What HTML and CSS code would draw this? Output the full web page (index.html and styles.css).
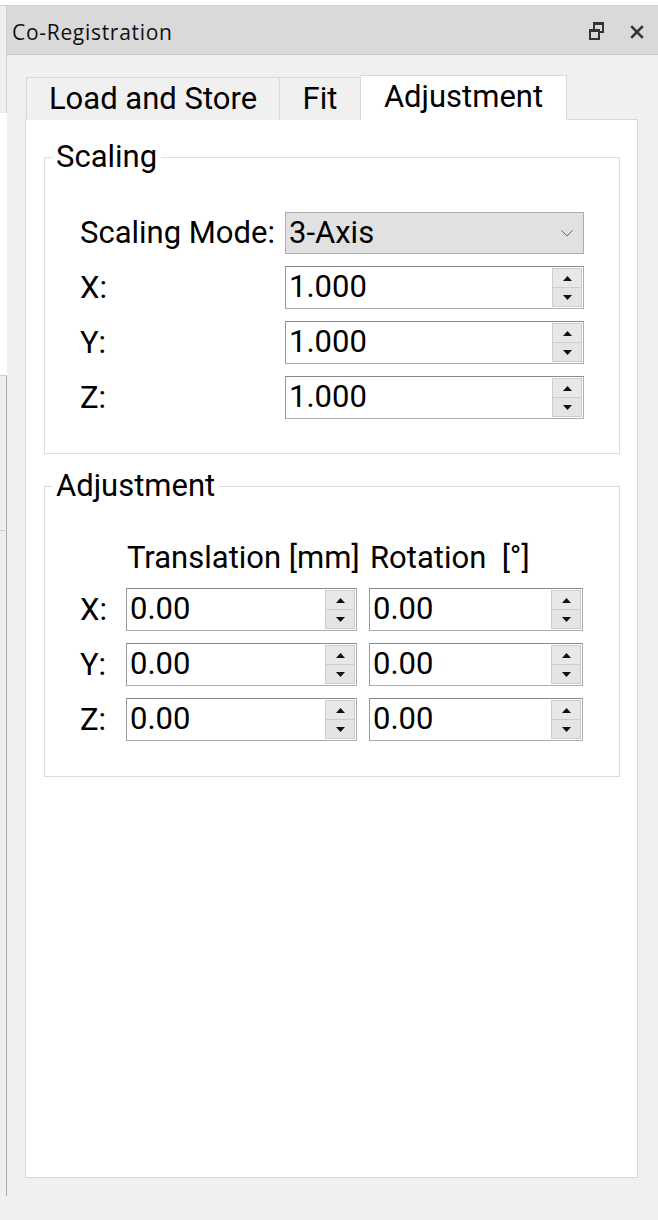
FILE: index.html
```html
<!DOCTYPE html>
<html>
<head>
<meta charset="utf-8">
<title>Co-Registration</title>
<link rel="stylesheet" href="styles.css">
</head>
<body>
<div class="topstrip"></div>
<div class="screen">
  <div class="side">
    <div class="side-a"></div>
    <div class="side-b"></div>
    <div class="side-c"></div>
    <div class="side-d"></div>
  </div>
  <div class="dock">
    <div class="titlebar">
      <span class="title">Co-Registration</span>
      <div class="title-btns">
        <svg class="ico-restore" width="15" height="18" viewBox="0 0 15 18">
          <rect x="4" y="0" width="11" height="11" fill="#333"/>
          <rect x="6" y="3" width="7" height="6" fill="#d9d9d9"/>
          <rect x="0" y="7" width="11" height="11" fill="#333"/>
          <rect x="2" y="10" width="7" height="6" fill="#d9d9d9"/>
        </svg>
        <svg class="ico-close" width="14" height="14" viewBox="0 0 14 14">
          <path d="M1.2 1.2 L12.8 12.8 M12.8 1.2 L1.2 12.8" stroke="#333" stroke-width="2.6" fill="none"/>
        </svg>
      </div>
    </div>
    <div class="dock-body">
      <div class="tabbar">
        <div class="tab tab-load">Load and Store</div>
        <div class="tab tab-fit">Fit</div>
        <div class="tab tab-adj active">Adjustment</div>
      </div>
      <div class="pane">
        <fieldset class="group group-scaling">
          <legend>Scaling</legend>
          <div class="scaling-grid">
            <span class="lbl">Scaling Mode:</span>
            <div class="combo">
              <span class="val">3-Axis</span>
              <svg class="chev" width="12" height="7" viewBox="0 0 12 7"><path d="M0.5 0.5 L6 6 L11.5 0.5" stroke="#666" stroke-width="1" fill="none"/></svg>
            </div>

            <span class="lbl">X:</span>
            <div class="spin">
              <span class="val">1.000</span>
              <div class="spin-btns">
                <div class="sb up"><svg width="9" height="5" viewBox="0 0 9 5"><polygon points="4.5,0 9,5 0,5" fill="#111"/></svg></div>
                <div class="sb down"><svg width="9" height="5" viewBox="0 0 9 5"><polygon points="0,0 9,0 4.5,5" fill="#111"/></svg></div>
              </div>
            </div>

            <span class="lbl">Y:</span>
            <div class="spin">
              <span class="val">1.000</span>
              <div class="spin-btns">
                <div class="sb up"><svg width="9" height="5" viewBox="0 0 9 5"><polygon points="4.5,0 9,5 0,5" fill="#111"/></svg></div>
                <div class="sb down"><svg width="9" height="5" viewBox="0 0 9 5"><polygon points="0,0 9,0 4.5,5" fill="#111"/></svg></div>
              </div>
            </div>

            <span class="lbl">Z:</span>
            <div class="spin">
              <span class="val">1.000</span>
              <div class="spin-btns">
                <div class="sb up"><svg width="9" height="5" viewBox="0 0 9 5"><polygon points="4.5,0 9,5 0,5" fill="#111"/></svg></div>
                <div class="sb down"><svg width="9" height="5" viewBox="0 0 9 5"><polygon points="0,0 9,0 4.5,5" fill="#111"/></svg></div>
              </div>
            </div>
          </div>
        </fieldset>

        <fieldset class="group group-adj">
          <legend>Adjustment</legend>
          <div class="adj-grid">
            <span></span>
            <span class="hdr">Translation [mm]</span>
            <span class="hdr">Rotation&nbsp; [°]</span>

            <span class="lbl">X:</span>
            <div class="spin spin-t">
              <span class="val">0.00</span>
              <div class="spin-btns">
                <div class="sb up"><svg width="9" height="5" viewBox="0 0 9 5"><polygon points="4.5,0 9,5 0,5" fill="#111"/></svg></div>
                <div class="sb down"><svg width="9" height="5" viewBox="0 0 9 5"><polygon points="0,0 9,0 4.5,5" fill="#111"/></svg></div>
              </div>
            </div>
            <div class="spin spin-r">
              <span class="val">0.00</span>
              <div class="spin-btns">
                <div class="sb up"><svg width="9" height="5" viewBox="0 0 9 5"><polygon points="4.5,0 9,5 0,5" fill="#111"/></svg></div>
                <div class="sb down"><svg width="9" height="5" viewBox="0 0 9 5"><polygon points="0,0 9,0 4.5,5" fill="#111"/></svg></div>
              </div>
            </div>

            <span class="lbl">Y:</span>
            <div class="spin spin-t">
              <span class="val">0.00</span>
              <div class="spin-btns">
                <div class="sb up"><svg width="9" height="5" viewBox="0 0 9 5"><polygon points="4.5,0 9,5 0,5" fill="#111"/></svg></div>
                <div class="sb down"><svg width="9" height="5" viewBox="0 0 9 5"><polygon points="0,0 9,0 4.5,5" fill="#111"/></svg></div>
              </div>
            </div>
            <div class="spin spin-r">
              <span class="val">0.00</span>
              <div class="spin-btns">
                <div class="sb up"><svg width="9" height="5" viewBox="0 0 9 5"><polygon points="4.5,0 9,5 0,5" fill="#111"/></svg></div>
                <div class="sb down"><svg width="9" height="5" viewBox="0 0 9 5"><polygon points="0,0 9,0 4.5,5" fill="#111"/></svg></div>
              </div>
            </div>

            <span class="lbl">Z:</span>
            <div class="spin spin-t">
              <span class="val">0.00</span>
              <div class="spin-btns">
                <div class="sb up"><svg width="9" height="5" viewBox="0 0 9 5"><polygon points="4.5,0 9,5 0,5" fill="#111"/></svg></div>
                <div class="sb down"><svg width="9" height="5" viewBox="0 0 9 5"><polygon points="0,0 9,0 4.5,5" fill="#111"/></svg></div>
              </div>
            </div>
            <div class="spin spin-r">
              <span class="val">0.00</span>
              <div class="spin-btns">
                <div class="sb up"><svg width="9" height="5" viewBox="0 0 9 5"><polygon points="4.5,0 9,5 0,5" fill="#111"/></svg></div>
                <div class="sb down"><svg width="9" height="5" viewBox="0 0 9 5"><polygon points="0,0 9,0 4.5,5" fill="#111"/></svg></div>
              </div>
            </div>
          </div>
        </fieldset>
      </div>
    </div>
  </div>
</div>
</body>
</html>
```

FILE: styles.css
```css
* { box-sizing: border-box; }

html, body {
  margin: 0;
  padding: 0;
}

body {
  width: 658px;
  height: 1220px;
  overflow: hidden;
  background: #f0f0f0;
  font-family: Roboto, "Liberation Sans", sans-serif;
  color: #000;
}

.topstrip {
  height: 6px;
  background: #fff;
  border-bottom: 1px solid #d2d2d2;
}

.screen {
  display: grid;
  grid-template-columns: 7px 1fr;
}

.side {
  display: flex;
  flex-direction: column;
}

.side-a {
  height: 107px;
  background: #efefef;
  border-right: 1px solid #cfcfcf;
}

.side-b {
  height: 262px;
  background: #fff;
}

.side-c {
  height: 155px;
  background: #efefef;
  border-top: 1px solid #d0d0d0;
  border-right: 1px solid #a9a9a9;
}

.side-d {
  height: 666px;
  background: #efefef;
  border-top: 1px solid #d0d0d0;
  border-right: 1px solid #a9a9a9;
}

.dock {
  display: flex;
  flex-direction: column;
}

.titlebar {
  height: 49px;
  background: #d9d9d9;
  border-bottom: 1px solid #c6c6c6;
  display: flex;
  align-items: center;
  justify-content: space-between;
  padding: 0 14px 0 5px;
}

.title {
  font-family: "Open Sans", "Noto Sans", sans-serif;
  font-size: 21px;
  letter-spacing: 0.7px;
  color: #111;
  margin-top: 4px;
}

.title-btns {
  display: flex;
  align-items: center;
  gap: 26px;
  margin-top: 1px;
}

.ico-close {
  margin-top: 2px;
}

.dock-body {
  padding: 20px 20px 0 18px;
}

.tabbar {
  display: flex;
  align-items: flex-end;
  height: 45px;
  padding-left: 1px;
}

.tab {
  height: 43px;
  display: flex;
  align-items: center;
  justify-content: center;
  font-size: 31px;
  line-height: 31px;
  background: #f0f0f0;
  border: 1px solid #d9d9d9;
  border-bottom: none;
  padding-bottom: 2px;
}

.tab-load {
  width: 254px;
}

.tab-fit {
  width: 80px;
  border-left: none;
  border-right: none;
}

.tab.active {
  width: 207px;
  height: 45px;
  background: #fff;
  position: relative;
  z-index: 1;
  padding-bottom: 3px;
}

.pane {
  margin-top: -1px;
  height: 1059px;
  background: #fff;
  border: 1px solid #d9d9d9;
  padding: 22px 17px 0 18px;
}

.group {
  margin: 0;
  padding: 0;
  min-width: 0;
  border: 1px solid #dcdcdc;
}

.group legend {
  font-size: 31px;
  line-height: 30px;
  padding: 0 4px;
  margin-left: 7px;
}

.group-adj {
  margin-top: 17px;
}

.lbl {
  font-size: 31px;
  line-height: 30px;
}

.scaling-grid {
  display: grid;
  grid-template-columns: 205px 1fr;
  row-gap: 12px;
  align-items: center;
  padding: 40px 35px 34px 35px;
}

.adj-grid {
  display: grid;
  grid-template-columns: 46px 243px 214px;
  row-gap: 12px;
  align-items: center;
  padding: 40px 35px 35px 35px;
}

.hdr {
  font-size: 31px;
  line-height: 34px;
  padding-left: 1px;
  white-space: nowrap;
  margin-bottom: 1px;
}

.combo {
  height: 42px;
  background: #e1e1e1;
  border: 1px solid #adadad;
  display: flex;
  align-items: center;
  justify-content: space-between;
  padding: 0 10px 0 3px;
}

.val {
  font-size: 31px;
  line-height: 30px;
}

.spin {
  height: 43px;
  display: flex;
  align-items: stretch;
  background: #fff;
  border: 1px solid #adadad;
  border-top-color: #8a8a8a;
  border-left-color: #9a9a9a;
}

.spin .val {
  flex: 1;
  padding-left: 3px;
  display: flex;
  align-items: center;
  padding-bottom: 1px;
}

.spin-t {
  width: 231px;
}

.spin-r {
  width: 214px;
}

.spin-btns {
  width: 31px;
  display: flex;
  flex-direction: column;
  padding: 1px 1px 1px 0;
}

.sb {
  flex: 1;
  display: flex;
  align-items: center;
  justify-content: center;
  background: #e8e8e8;
  border: 1px solid #cdcdcd;
}

.sb.down {
  border-top: none;
  background: #e4e4e4;
}
```
